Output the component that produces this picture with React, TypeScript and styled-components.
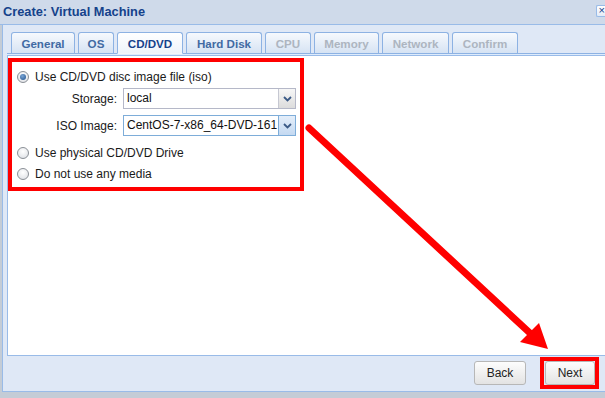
import React from "react";
import styled, { createGlobalStyle } from "styled-components";

const Global = createGlobalStyle`
  html, body { margin: 0; padding: 0; background: #c4ccd6; }
  body { font-family: "Liberation Sans", Arial, sans-serif; }
  * { box-sizing: border-box; }
`;

const Window = styled.div`
  position: relative;
  width: 605px;
  height: 398px;
  overflow: hidden;
  display: flex;
  flex-direction: column;
  background: #c4ccd6;
`;

const TitleBar = styled.div`
  height: 25px;
  flex: none;
  display: flex;
  align-items: center;
  justify-content: space-between;
  padding: 0 0 1px 3px;
  background: #cfdaea;
  border-bottom: 1px solid #99bbe8;
  font-weight: bold;
  font-size: 12.8px;
  color: #15428b;
`;

const CloseBtn = styled.div`
  width: 9px;
  height: 12px;
  margin-top: -1px;
  border: 1px solid #99bbe8;
  border-right: none;
  border-radius: 2px 0 0 2px;
  background: linear-gradient(#ffffff, #e4ecf7);
  color: #15428b;
  font-size: 11px;
  line-height: 9px;
  text-align: right;
  font-weight: normal;
  overflow: hidden;
`;

const Frame = styled.div`
  height: 367px;
  flex: none;
  margin-left: 2px;
  border-left: 1px solid #99bbe8;
  border-bottom: 1px solid #99bbe8;
  background: #dfe8f6;
  display: flex;
  flex-direction: column;
  padding: 7px 0 0 4px;
`;

const TabBar = styled.div`
  display: flex;
  align-items: flex-end;
  gap: 3px;
  height: 22px;
  padding-left: 4px;
  border-bottom: 1px solid #8db2e3;
  flex: none;
`;

type TabState = "normal" | "active" | "disabled";

const Tab = styled.div<{ $w: number; $state: TabState }>`
  width: ${(p) => p.$w}px;
  height: ${(p) => (p.$state === "active" ? 22 : 21)}px;
  margin-bottom: ${(p) => (p.$state === "active" ? -1 : 0)}px;
  border: 1px solid #8db2e3;
  border-bottom: ${(p) => (p.$state === "active" ? "1px solid #f3f7fc" : "none")};
  border-radius: 3px 3px 0 0;
  background: ${(p) =>
    p.$state === "active"
      ? "linear-gradient(#ffffff, #eef4fb)"
      : "linear-gradient(#f6f9fd, #d6e3f3)"};
  display: flex;
  align-items: center;
  justify-content: center;
  font-size: 11.6px;
  font-weight: bold;
  padding-top: 1px;
  color: ${(p) =>
    p.$state === "active" ? "#15428b" : p.$state === "disabled" ? "#adb5c0" : "#416aa3"};
`;

const StripSpacer = styled.div`
  height: 1px;
  flex: none;
  background: #deecfd;
`;

const Panel = styled.div`
  height: 301px;
  flex: none;
  background: #ffffff;
  border: 1px solid #99bbe8;
  border-right: none;
  padding: 2px 0 0 0;
`;

const AnnotBox = styled.div`
  width: 296px;
  height: 133px;
  border: 4px solid #ff0000;
  padding: 4px 0 0 5px;
  display: flex;
  flex-direction: column;
`;

const RadioRow = styled.div<{ $h: number; $mt?: number }>`
  height: ${(p) => p.$h}px;
  margin-top: ${(p) => p.$mt ?? 0}px;
  display: flex;
  align-items: center;
  gap: 6px;
  font-size: 12px;
  color: #1a1a1a;
`;

const Radio = styled.span<{ $checked?: boolean }>`
  width: 12px;
  height: 12px;
  flex: none;
  border-radius: 50%;
  border: 1px solid #8a8f96;
  background: radial-gradient(circle at 50% 35%, #ffffff 0%, #e2e4e8 80%);
  display: flex;
  align-items: center;
  justify-content: center;
  &::after {
    content: "";
    display: ${(p) => (p.$checked ? "block" : "none")};
    width: 6px;
    height: 6px;
    border-radius: 50%;
    background: radial-gradient(circle at 40% 35%, #7aa6d6, #1f4f8a);
  }
`;

const FieldRow = styled.div<{ $mt?: number }>`
  display: flex;
  align-items: center;
  gap: 6px;
  margin-top: ${(p) => p.$mt ?? 0}px;
  height: 21px;
`;

const FieldLabel = styled.div`
  width: 100px;
  text-align: right;
  font-size: 12px;
  color: #1a1a1a;
`;

const Combo = styled.div<{ $focus?: boolean }>`
  width: 173px;
  height: 21px;
  display: flex;
  border: 1px solid ${(p) => (p.$focus ? "#7eadd9" : "#b5b8c8")};
  background: #ffffff;
`;

const ComboText = styled.div`
  flex: 1;
  padding: 0 0 0 3px;
  font-size: 12px;
  line-height: 19px;
  color: #111;
  white-space: nowrap;
  overflow: hidden;
`;

const Trigger = styled.div<{ $focus?: boolean }>`
  width: 17px;
  flex: none;
  border-left: 1px solid ${(p) => (p.$focus ? "#7eadd9" : "#c6c8d2")};
  background: ${(p) =>
    p.$focus ? "linear-gradient(#e4eefa, #c4d9f1)" : "linear-gradient(#f7f7f7, #dcdcdc)"};
  display: flex;
  align-items: center;
  justify-content: center;
`;

const Toolbar = styled.div`
  flex: 1;
  display: flex;
  align-items: center;
  justify-content: flex-end;
  gap: 19px;
  padding: 0 10px 1px 0;
`;

const Button = styled.div<{ $w: number }>`
  position: relative;
  width: ${(p) => p.$w}px;
  height: 24px;
  border: 1px solid #b7b7b7;
  border-radius: 3px;
  background: linear-gradient(#fdfdfd, #e3e3e3);
  display: flex;
  align-items: center;
  justify-content: center;
  font-size: 12px;
  color: #222;
`;

const Highlight = styled.div`
  position: absolute;
  left: -6px;
  right: -5px;
  top: -5px;
  bottom: -5px;
  border: 4px solid #ff0000;
  pointer-events: none;
`;

const ArrowLayer = styled.svg`
  position: absolute;
  left: 0;
  top: 0;
  pointer-events: none;
`;

const Chevron: React.FC = () => (
  <svg width="9" height="6" viewBox="0 0 9 6">
    <path d="M1 1 L4.5 4.5 L8 1" fill="none" stroke="#3b5a86" strokeWidth="1.8" />
  </svg>
);

const tabs: { label: string; w: number; state: TabState }[] = [
  { label: "General", w: 64, state: "normal" },
  { label: "OS", w: 36, state: "normal" },
  { label: "CD/DVD", w: 66, state: "active" },
  { label: "Hard Disk", w: 76, state: "normal" },
  { label: "CPU", w: 46, state: "disabled" },
  { label: "Memory", w: 65, state: "disabled" },
  { label: "Network", w: 67, state: "disabled" },
  { label: "Confirm", w: 66, state: "disabled" },
];

export default function App() {
  return (
    <>
      <Global />
      <Window>
        <TitleBar>
          <span>Create: Virtual Machine</span>
          <CloseBtn>×</CloseBtn>
        </TitleBar>
        <Frame>
          <TabBar>
            {tabs.map((t) => (
              <Tab key={t.label} $w={t.w} $state={t.state}>
                {t.label}
              </Tab>
            ))}
          </TabBar>
          <StripSpacer />
          <Panel>
            <AnnotBox>
              <RadioRow $h={22}>
                <Radio $checked />
                <span>Use CD/DVD disc image file (iso)</span>
              </RadioRow>
              <FieldRow>
                <FieldLabel>Storage:</FieldLabel>
                <Combo>
                  <ComboText>local</ComboText>
                  <Trigger>
                    <Chevron />
                  </Trigger>
                </Combo>
              </FieldRow>
              <FieldRow $mt={6}>
                <FieldLabel>ISO Image:</FieldLabel>
                <Combo $focus>
                  <ComboText>CentOS-7-x86_64-DVD-161</ComboText>
                  <Trigger $focus>
                    <Chevron />
                  </Trigger>
                </Combo>
              </FieldRow>
              <RadioRow $h={20} $mt={7}>
                <Radio />
                <span>Use physical CD/DVD Drive</span>
              </RadioRow>
              <RadioRow $h={20} $mt={1}>
                <Radio />
                <span>Do not use any media</span>
              </RadioRow>
            </AnnotBox>
          </Panel>
          <Toolbar>
            <Button $w={52}>Back</Button>
            <Button $w={50}>
              Next
              <Highlight />
            </Button>
          </Toolbar>
        </Frame>
        <ArrowLayer width="605" height="398" viewBox="0 0 605 398">
          <line x1="309" y1="128" x2="531" y2="334" stroke="#ff0000" strokeWidth="7" strokeLinecap="round" />
          <polygon points="548,349 520,342 539,323" fill="#ff0000" />
        </ArrowLayer>
      </Window>
    </>
  );
}
